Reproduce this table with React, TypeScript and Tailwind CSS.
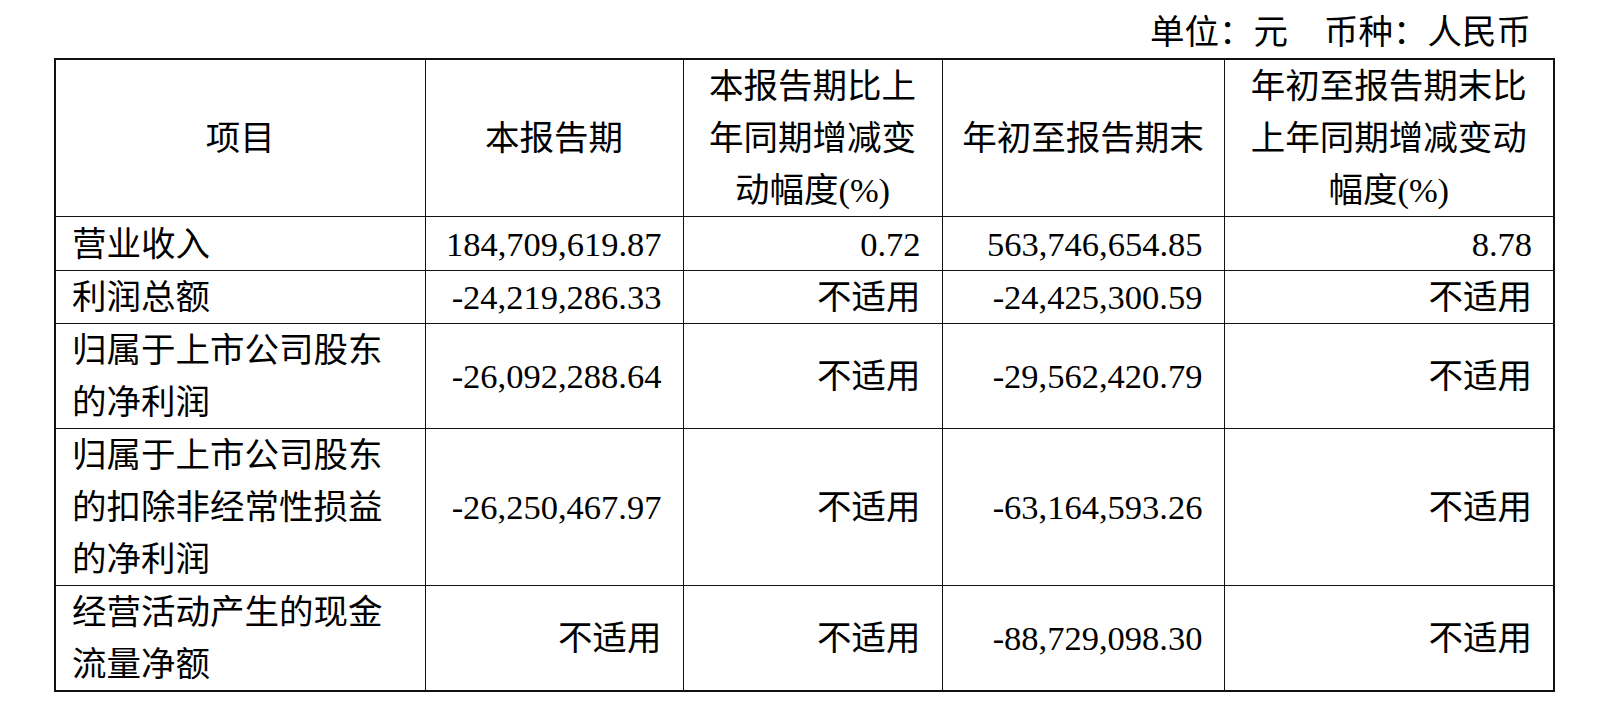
import React from 'react'

type Row = {
  label: string[]
  cells: string[]
  h: string
}

const rows: Row[] = [
  { label: ['营业收入'], cells: ['184,709,619.87', '0.72', '563,746,654.85', '8.78'], h: 'h-[54px]' },
  { label: ['利润总额'], cells: ['-24,219,286.33', '不适用', '-24,425,300.59', '不适用'], h: 'h-[53px]' },
  {
    label: ['归属于上市公司股东', '的净利润'],
    cells: ['-26,092,288.64', '不适用', '-29,562,420.79', '不适用'],
    h: 'h-[104px]',
  },
  {
    label: ['归属于上市公司股东', '的扣除非经常性损益', '的净利润'],
    cells: ['-26,250,467.97', '不适用', '-63,164,593.26', '不适用'],
    h: 'h-[157px]',
  },
  {
    label: ['经营活动产生的现金', '流量净额'],
    cells: ['不适用', '不适用', '-88,729,098.30', '不适用'],
    h: 'h-[103px]',
  },
]

const headers: string[][] = [
  ['项目'],
  ['本报告期'],
  ['本报告期比上', '年同期增减变', '动幅度(%)'],
  ['年初至报告期末'],
  ['年初至报告期末比', '上年同期增减变动', '幅度(%)'],
]

function Lines({ lines }: { lines: string[] }) {
  return (
    <>
      {lines.map((l, i) => (
        <div key={i} className="whitespace-nowrap">
          {l}
        </div>
      ))}
    </>
  )
}

export default function App() {
  return (
    <div
      className="min-h-screen bg-white text-black pl-[54px] text-[34.5px] leading-[52px]"
      style={{ fontFamily: '"Liberation Serif", "Noto Sans CJK SC", serif' }}
    >
      {/* Unit line */}
      <div className="w-[1499px] h-[58px] pt-[6px] pr-[22px] flex justify-end whitespace-nowrap">
        <span>单位：元</span>
        <span className="ml-[36px]">币种：人民币</span>
      </div>

      {/* Table */}
      <table className="w-[1499px] table-fixed border-collapse border-2 border-[#111]">
        <colgroup>
          <col className="w-[370px]" />
          <col className="w-[258px]" />
          <col className="w-[259px]" />
          <col className="w-[282px]" />
          <col className="w-[330px]" />
        </colgroup>
        <thead>
          <tr className="h-[156px]">
            {headers.map((h, i) => (
              <th key={i} className="border border-[#111] font-normal text-center align-middle p-0">
                <Lines lines={h} />
              </th>
            ))}
          </tr>
        </thead>
        <tbody>
          {rows.map((r, i) => (
            <tr key={i} className={r.h}>
              <td className="border border-[#111] align-middle pl-[16px] pr-0 py-0 text-left">
                <Lines lines={r.label} />
              </td>
              {r.cells.map((c, j) => (
                <td
                  key={j}
                  className="border border-[#111] align-middle pr-[21px] pl-0 py-0 text-right whitespace-nowrap"
                >
                  {c}
                </td>
              ))}
            </tr>
          ))}
        </tbody>
      </table>
    </div>
  )
}
